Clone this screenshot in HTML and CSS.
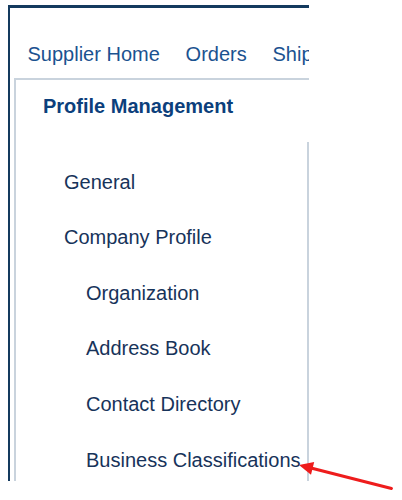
FILE: index.html
```html
<!DOCTYPE html>
<html lang="en">
<head>
<meta charset="utf-8">
<title>Profile Management</title>
<link rel="stylesheet" href="styles.css">
</head>
<body>
<div class="frame">
  <nav class="topnav">
    <a class="topnav-item">Supplier Home</a>
    <a class="topnav-item">Orders</a>
    <a class="topnav-item">Ship</a>
  </nav>
  <section class="panel">
    <h1 class="panel-title">Profile Management</h1>
    <ul class="menu">
      <li class="menu-item">General</li>
      <li class="menu-item">Company Profile</li>
      <li class="menu-item sub">Organization</li>
      <li class="menu-item sub">Address Book</li>
      <li class="menu-item sub">Contact Directory</li>
      <li class="menu-item sub">Business Classifications</li>
    </ul>
  </section>
</div>
<svg class="annotation" width="402" height="500" viewBox="0 0 402 500">
  <line x1="391.5" y1="488.5" x2="309" y2="467.5" stroke="#ee1c1c" stroke-width="3" stroke-linecap="round"/>
  <polygon points="299,465 314.2,462 311,474.8" fill="#ee1c1c"/>
</svg>
</body>
</html>
```

FILE: styles.css
```css
html, body {
  margin: 0;
  padding: 0;
  background: #ffffff;
}

body {
  position: relative;
  width: 402px;
  height: 500px;
  overflow: hidden;
  font-family: "Liberation Sans", Arial, Helvetica, sans-serif;
}

.frame {
  box-sizing: border-box;
  margin: 5px 0 0 8px;
  width: 301px;
  height: 476px;
  border-top: 3px solid #143a5e;
  border-left: 2px solid #143a5e;
  overflow: hidden;
}

.topnav {
  display: flex;
  gap: 25.8px;
  padding: 34px 0 0 17.5px;
  margin-bottom: 12px;
  height: 24px;
  white-space: nowrap;
}

.topnav-item {
  font-size: 20px;
  line-height: 24px;
  color: #1b5290;
  flex: none;
}

.panel {
  box-sizing: border-box;
  margin-left: 4px;
  width: 600px;
  border-top: 2px solid #c9d3dd;
  border-left: 2px solid #c9d3dd;
  padding-top: 14px;
  height: 600px;
}

.panel-title {
  margin: 0 0 24px 27px;
  font-size: 20px;
  line-height: 24px;
  font-weight: bold;
  color: #0c3f7c;
}

.menu {
  list-style: none;
  margin: 0;
  padding: 12.6px 0 0 0;
  width: 291px;
  height: 500px;
  border-right: 2px solid #c9d3dd;
}

.menu-item {
  font-size: 20px;
  line-height: 55.6px;
  color: #17335a;
  padding-left: 48px;
  white-space: nowrap;
}

.menu-item.sub {
  padding-left: 70px;
}

.annotation {
  position: absolute;
  left: 0;
  top: 0;
  pointer-events: none;
}
```
